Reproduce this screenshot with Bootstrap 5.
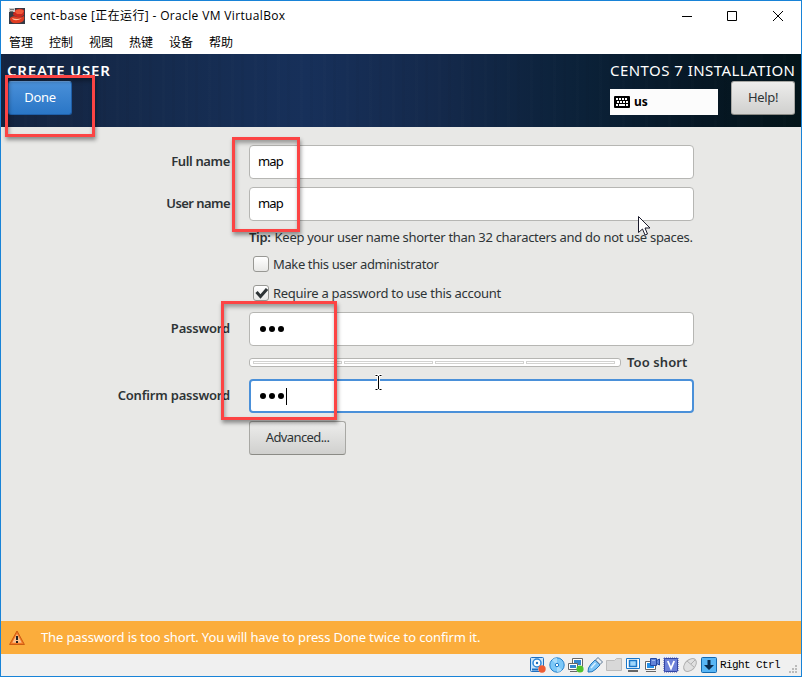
<!DOCTYPE html>
<html lang="zh-CN">
<head>
<meta charset="utf-8">
<title>cent-base - Oracle VM VirtualBox</title>
<meta name="viewport" content="width=device-width, initial-scale=1">
<link rel="stylesheet" href="https://cdn.jsdelivr.net/npm/bootstrap@5.3.0/dist/css/bootstrap.min.css">
<style>
body{width:802px;height:677px;overflow:hidden;font-family:"Noto Sans","Open Sans",sans-serif;font-size:13px;line-height:18px;color:#2e3436}
.vm-window{width:802px;height:677px;border:1px solid #1883d7;background:#fff}
.title-bar{height:29px;padding-left:8px;color:#000;font:12px/18px "Open Sans","Noto Sans CJK SC",sans-serif}
.title-text{margin-left:5px;letter-spacing:.35px}
.win-controls{gap:35px;padding-right:17px}
.menu-bar{height:24px;padding-left:8px;gap:16px;color:#000;font:12px/18px "Noto Sans CJK SC",sans-serif}
.spoke-head{height:73px;padding:0 6px;background:repeating-linear-gradient(90deg,rgba(255,255,255,.008) 0 3px,transparent 3px 10px,rgba(0,0,0,.025) 10px 13px,transparent 13px 23px),linear-gradient(90deg,#142440 0,#152b4e 20%,#17305a 38%,#14294b 55%,#0b2138 73%,#061724 88%,#031419 100%);color:#fff}
.head-title{font-size:15px;line-height:20px;margin-top:6px;white-space:nowrap}
.t-create{letter-spacing:.8px}
.t-inst{letter-spacing:.45px;margin-right:-.45px}
.gtk-btn{height:34px;padding:0;border:1px solid #a8a8a4;border-bottom-color:#8b8b86;border-radius:3px;background:linear-gradient(#ededec,#d0d0ce);color:#2e3436;font-size:13px;line-height:28px;padding-bottom:2px;letter-spacing:-.35px}
.done-btn{width:64px;margin:1px 0 0 1px;border-color:#1f5fa8;border-top-color:#6ba4e2;background:linear-gradient(#4a90d9,#2a76c6);color:#fff}
.help-btn{width:64px;margin:1px 0 0 13px}
.adv-btn{width:97px;letter-spacing:-.6px}
.kbd-box{width:108px;height:26px;background:#fcfcfc;color:#000;margin-top:9px;padding-left:4px;font-weight:700;font-size:12px}
.spoke-body{height:494px;padding-top:18px;background:#e8e8e6}
.lbl{width:229px;margin-right:19px;padding-bottom:2px;font-weight:600;white-space:nowrap;letter-spacing:-.2px}
.t-full{letter-spacing:-.35px}
.t-user{letter-spacing:-.55px}
.fld{width:445px;height:34px;padding:0 8px;border:1px solid #b6b6b3;border-radius:4px;background:#fff;color:#000;font-size:13px;line-height:30px;letter-spacing:-.8px}
.fld.active{border:2px solid #4a90d9;padding:0 7px}
.dots{gap:3px}
.fld.dots{padding-left:10px}
.fld.dots.active{padding-left:9px}
.dot{width:6px;height:6px;border-radius:50%;background:#000}
.caret{width:1px;height:17px;margin-left:-1px;background:#000}
.inset{margin-left:248px;white-space:nowrap}
.chk{width:16px;height:16px;margin:0 4px 0 4px;border:1px solid #989894;border-radius:3px;background:linear-gradient(#fff,#e8e8e6)}
.h-tip,.h-c1,.h-c2{padding-bottom:2px}
.h-tip{height:33px}.h-c1{height:21px}.h-c2{height:37px}.h-str{height:33px}
.t-tip{letter-spacing:-.3px}.t-adm{letter-spacing:-.38px}.t-req{letter-spacing:-.28px}
.t-short{padding-bottom:2px;margin-left:6px;letter-spacing:.1px}
.meter{width:372px;height:9px;border:1px solid #b6b6b3;border-radius:3px;background:#fff;padding:2px 5px 2px 3px;gap:2px}
.seg{height:3px;border:1px solid #d2d2d0;background:#fff}
.warn-bar{height:33px;background:#fbad3c;color:#fff;padding-left:8px}
.warn-text{margin-left:16px;padding-bottom:2px;letter-spacing:-.12px}
.status-bar{height:22px;background:#f0f0f0;padding-right:2px;gap:3px}
.host-key{font:11px "Liberation Mono",monospace;color:#000;letter-spacing:-.6px;white-space:pre}
.grip{margin-left:4px}
.mark-box{position:absolute;border:3px solid #fc4444;box-shadow:1px 3px 4px rgba(0,0,0,.4),inset 1px 3px 4px rgba(0,0,0,.35)}
.mk-done{left:5px;top:75px;width:90px;height:62px}
.mk-name{left:232px;top:137px;width:68px;height:95px}
.mk-pass{left:221px;top:301px;width:116px;height:119px}
.ptr{position:absolute}
.ptr-arrow{left:638px;top:216px}
.ptr-text{left:374px;top:374px}
svg{display:block;flex:none}
</style>
<script src="https://cdn.jsdelivr.net/npm/bootstrap@5.3.0/dist/js/bootstrap.bundle.min.js"></script>
</head>
<body>
<div class="vm-window d-flex flex-column">
  <header class="title-bar d-flex align-items-center">
    <svg width="16" height="16" viewBox="0 0 16 16"><path fill="#353b46" d="M0 0h16v16H0z"/><path fill="#c9281f" d="M5 3Q10-1 15 2v5q-3 3-7 2L4 7Z"/><path fill="#f0583a" d="M7 2q5-2 8 1l-2 3-5 0-2-2Z"/><path fill="#e03c22" d="M1 10q3-3 7-1 4 1 7-1 1 4-2 6-4 2-9 1-3-1-3-5Z"/><path fill="#ffc09c" d="M3 10q5 2 10 0-5 3.500-9 1.500z"/><path fill="#ccc" d="M0 0h6v4H0z"/><path stroke="#777" d="M1 1.500h4M1 3.500h3"/></svg>
    <span class="title-text">cent-base [正在运行] - Oracle VM VirtualBox</span>
    <div class="win-controls d-flex ms-auto">
      <svg width="12" height="12"><path stroke="#000" d="M2 6.500h10"/></svg>
      <svg width="10" height="12"><path fill="none" stroke="#000" d="M.5 1.500h9v9h-9z"/></svg>
      <svg width="12" height="12"><path stroke="#000" d="M1 1l10 10M11 1L1 11"/></svg>
    </div>
  </header>
  <nav class="menu-bar d-flex align-items-center"><span>管理</span><span>控制</span><span>视图</span><span>热键</span><span>设备</span><span>帮助</span></nav>
  <section class="spoke-head d-flex justify-content-between">
    <div><div class="head-title fw-semibold t-create">CREATE USER</div><button class="btn gtk-btn done-btn">Done</button></div>
    <div class="d-flex flex-column align-items-end"><div class="head-title t-inst">CENTOS 7 INSTALLATION</div>
      <div class="d-flex align-items-start"><div class="kbd-box d-flex align-items-center"><svg class="me-1" width="16" height="12"><rect width="16" height="12" rx="1"/><path stroke="#fff" stroke-width="2" stroke-dasharray="2 1" d="M2 3h12M3 6h11"/><path stroke="#fff" stroke-width="2" d="M2 9h2M5 9h6M12 9h2"/></svg>us</div><button class="btn gtk-btn help-btn">Help!</button></div></div>
  </section>
  <main class="spoke-body">
    <div class="d-flex align-items-center mb-2"><label class="lbl t-full text-end">Full name</label><div class="fld">map</div></div>
    <div class="d-flex align-items-center"><label class="lbl t-user text-end">User name</label><div class="fld">map</div></div>
    <div class="inset h-tip d-flex align-items-center t-tip"><b class="fw-semibold me-1">Tip:</b><span>Keep your user name shorter than 32 characters and do not use spaces.</span></div>
    <div class="inset h-c1 d-flex align-items-center"><span class="chk"></span><span class="t-adm">Make this user administrator</span></div>
    <div class="inset h-c2 d-flex align-items-center"><span class="chk"><svg width="14" height="14"><path fill="none" stroke="#2e3436" stroke-width="3" d="M2.500 6l4 4.500L13 3"/></svg></span><span class="t-req">Require a password to use this account</span></div>
    <div class="d-flex align-items-center"><label class="lbl text-end">Password</label><div class="fld dots d-flex align-items-center"><i class="dot"></i><i class="dot"></i><i class="dot"></i></div></div>
    <div class="inset h-str d-flex align-items-center"><div class="meter d-flex"><span class="seg flex-fill"></span><span class="seg flex-fill"></span><span class="seg flex-fill"></span><span class="seg flex-fill"></span></div><b class="fw-semibold t-short">Too short</b></div>
    <div class="d-flex align-items-center mb-2"><label class="lbl text-end">Confirm password</label><div class="fld active dots d-flex align-items-center"><i class="dot"></i><i class="dot"></i><i class="dot"></i><i class="caret"></i></div></div>
    <div class="inset"><button class="btn gtk-btn adv-btn">Advanced...</button></div>
  </main>
  <div class="warn-bar d-flex align-items-center">
    <svg width="16" height="16" viewBox="0 0 16 16"><path fill="#f47b25" stroke="#cc5b12" stroke-linejoin="round" d="M8 1L15.400 14.500H.6Z"/><path fill="#fbc18d" d="M8 4l4.800 8.800H3.200Z"/><path stroke="#222" stroke-width="2" d="M8 6v4M8 11v2"/></svg>
    <span class="warn-text">The password is too short. You will have to press Done twice to confirm it.</span>
  </div>
  <footer class="status-bar d-flex align-items-center justify-content-end">
    <svg width="16" height="16"><rect x=".5" y=".5" width="13" height="14" rx="1" fill="#c9e4fb" stroke="#1d6fc0"/><circle cx="7" cy="6" r="4" fill="#fff" stroke="#2c86d8" stroke-width="1.500"/><circle cx="7" cy="6" r="1.200" fill="#1d6fc0"/><path stroke="#1d6fc0" stroke-width="2" d="M2 12.500h6"/><circle cx="12" cy="12" r="3.700" fill="#ee5c34"/></svg>
    <svg width="16" height="16"><circle cx="8" cy="8" r="7.200" fill="#7cc8f8" stroke="#2380cc"/><path fill="#a8dcfc" d="M8 8L3 3a7 7 0 0 1 5-2zM8 8l5 5a7 7 0 0 1-5 2z"/><circle cx="8" cy="8" r="1.700" fill="#fff" stroke="#1f78c4"/></svg>
    <svg width="16" height="16"><path fill="#fff" stroke="#666" d="M4.500 1.500h10v8h-10z"/><path fill="#3486cf" d="M6 3h7v5H6z"/><path fill="#fff" stroke="#666" d="M.5 6.500h9v6h-9z"/><path stroke="#666" d="M2 14.500h7"/><path fill="#3486cf" d="M2 8h6v3H2z"/><circle cx="12" cy="12" r="3.600" fill="#50c42c"/></svg>
    <svg width="16" height="16"><path fill="#7cc4f6" stroke="#2578bd" d="M1 15q-.5-4 3-8l4-4 5 5-4 4q-4 4-8 3z"/><path fill="#e8eef4" stroke="#5a7793" d="M8.500 3l2.500-2.500 4.500 4.500L13 7.500z"/><path stroke="#d9f0ff" stroke-width="1.500" d="M4 11l4.500-5"/></svg>
    <svg width="16" height="16"><path fill="#d8d8d8" stroke="#bcbcbc" d="M.5 3.500h8l2-2h5v12H.5z"/></svg>
    <svg width="16" height="16"><path fill="#fff" stroke="#1977c9" d="M1.500 1.500h13v10h-13z"/><path fill="#9fd6fb" stroke="#1977c9" stroke-width="1.500" d="M4.500 3.500h7v6h-7z"/><path stroke="#666" stroke-width="2" d="M3 14h10"/></svg>
    <svg width="16" height="16"><path fill="#fff" stroke="#666" d="M1.500 4.500h10v8h-10z"/><path stroke="#666" d="M2 14.500h10"/><path fill="#2590e8" d="M3 6h7v5H3z"/><path fill="#6284d8" stroke="#2448a2" d="M6.500 1.500h6v7h-6zM12.500 3.500l3-1.500v6l-3-1.500z"/><path stroke="#9fbcf3" d="M8 3.500h3"/></svg>
    <svg width="16" height="16"><path stroke="#4255b8" stroke-width="15" stroke-dasharray="1 1" d="M1 8h14"/><path stroke="#4255b8" stroke-dasharray="1 1" stroke-width="15" d="M8 1v14"/><rect x="1.500" y="1.500" width="13" height="13" rx="1" fill="#6c80d8" stroke="#3345a4"/><path fill="none" stroke="#fff" stroke-width="1.800" d="M4.800 4l3.200 7.500L11.200 4"/></svg>
    <svg width="16" height="16"><ellipse cx="8" cy="8" rx="5" ry="7.500" transform="rotate(45 8 8)" fill="#e0e0e0" stroke="#b0b0b0"/><path fill="none" stroke="#b0b0b0" d="M5 4l7 6M9 7l4-4"/></svg>
    <svg width="16" height="16"><rect x=".5" y=".5" width="15" height="15" rx="1" fill="#58b6f6" stroke="#1469ae"/><path fill="#0a2c50" d="M6.500 3h3v5H13l-5 5-5-5h3.500z"/></svg>
    <span class="host-key">Right Ctrl</span>
    <svg class="grip align-self-end" width="12" height="12"><path fill="#bbb" d="M8 1h2v2H8zM5 4h2v2H5zM8 4h2v2H8zM2 7h2v2H2zM5 7h2v2H5zM8 7h2v2H8z"/></svg>
  </footer>
</div>
<svg class="ptr ptr-arrow" width="14" height="20"><path fill="#fff" stroke="#1b1b2b" d="M.5.500v16l4-3.500 2.500 6 2.500-1-2.500-6H12z"/></svg>
<svg class="ptr ptr-text" width="9" height="18"><path fill="none" stroke="#fff" stroke-width="3" d="M1 1.500h7M4.500 1v15M1 15.500h7"/><path fill="none" stroke="#000" d="M1.500 1.500h2M5.500 1.500h2M4.500 2v13M1.500 15.500h2M5.500 15.500h2"/></svg>
<div class="mark-box mk-done"></div><div class="mark-box mk-name"></div><div class="mark-box mk-pass"></div>
</body>
</html>
